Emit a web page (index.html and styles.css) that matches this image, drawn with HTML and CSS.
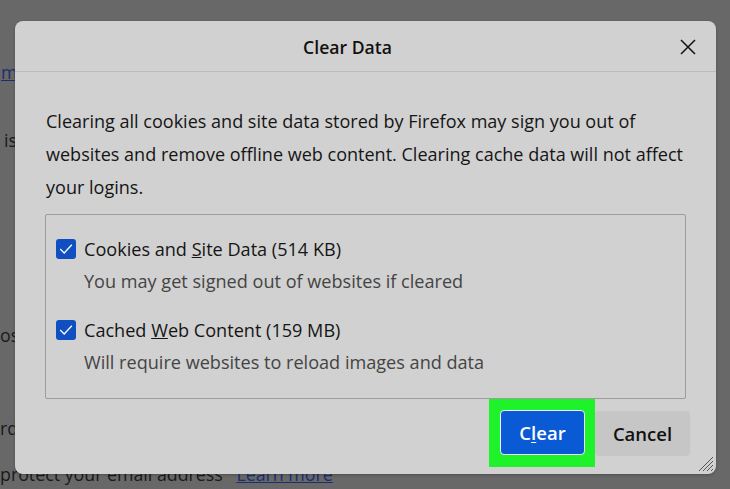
FILE: index.html
```html
<!DOCTYPE html>
<html lang="en">
<head>
<meta charset="utf-8">
<title>Clear Data</title>
<link rel="stylesheet" href="styles.css">
</head>
<body>
<div class="page">
  <div class="bg-line bg-l1"><a class="bg-link">m</a></div>
  <div class="bg-line bg-l2">is</div>
  <div class="bg-line bg-l3">os</div>
  <div class="bg-line bg-l4">rd:</div>
  <div class="bg-line bg-l5">protect your email address <a class="bg-link">Learn more</a></div>
</div>

<div class="dialog">
  <div class="dialog-header">
    <div class="dialog-title">Clear Data</div>
    <div class="close-btn">
      <svg width="16" height="16" viewBox="0 0 16 16"><path d="M1 1 L15 15 M15 1 L1 15" stroke="#111" stroke-width="1.5" fill="none"/></svg>
    </div>
  </div>
  <div class="dialog-body">
    <p class="intro">Clearing all cookies and site data stored by Firefox may sign you out of websites and remove offline web content. Clearing cache data will not affect your logins.</p>
    <div class="options">
      <div class="option">
        <div class="option-row">
          <span class="checkbox"><svg width="20" height="20" viewBox="0 0 20 20"><path d="M4.2 10 L8.2 14 L15.8 5.8" stroke="#fff" stroke-width="1.3" fill="none"/></svg></span>
          <span class="option-label">Cookies and <u>S</u>ite Data (514 KB)</span>
        </div>
        <div class="option-desc">You may get signed out of websites if cleared</div>
      </div>
      <div class="option">
        <div class="option-row">
          <span class="checkbox"><svg width="20" height="20" viewBox="0 0 20 20"><path d="M4.2 10 L8.2 14 L15.8 5.8" stroke="#fff" stroke-width="1.3" fill="none"/></svg></span>
          <span class="option-label">Cached <u>W</u>eb Content (159 MB)</span>
        </div>
        <div class="option-desc">Will require websites to reload images and data</div>
      </div>
    </div>
  </div>
  <div class="dialog-footer">
    <div class="highlight">
      <button class="btn btn-primary">C<u>l</u>ear</button>
    </div>
    <button class="btn btn-secondary">Cancel</button>
  </div>
  <svg class="grip" width="18" height="18" viewBox="0 0 18 18">
    <path d="M17 3 L3 17 M17 7 L7 17 M17 11 L11 17 M17 15 L15 17" stroke="#555" stroke-width="1" fill="none"/>
  </svg>
</div>
</body>
</html>
```

FILE: styles.css
```css
html, body {
  margin: 0;
  padding: 0;
}
body {
  width: 730px;
  height: 489px;
  overflow: hidden;
  position: relative;
  background: #686868;
  font-family: "Open Sans", "Noto Sans", sans-serif;
  color: #151515;
}
.page {
  display: flex;
  flex-direction: column;
  font-size: 17.8px;
  color: #1a1a1a;
  white-space: nowrap;
}
.bg-line {
  height: 28px;
  line-height: 28px;
}
.bg-link {
  color: #1b2f6e;
  text-decoration: underline;
}
.bg-l1 { margin-top: 58px; padding-left: 1px; }
.bg-l2 { margin-top: 40px; padding-left: 4px; }
.bg-l3 { margin-top: 167px; padding-left: 0; }
.bg-l4 { margin-top: 65px; padding-left: 0; }
.bg-l5 { margin-top: 18px; padding-left: 0; }
.bg-l5 .bg-link { margin-left: 9px; }

.dialog {
  position: absolute;
  left: 15px;
  top: 21px;
  width: 701px;
  height: 453px;
  background: #d1d1d1;
  border-radius: 8px;
  display: flex;
  flex-direction: column;
  box-shadow: 0 1px 3px rgba(0,0,0,0.25);
}
.dialog-header {
  height: 50px;
  border-bottom: 1px solid #bcbcbc;
  display: flex;
  align-items: center;
}
.dialog-title {
  flex: 1;
  text-align: center;
  font-size: 17.6px;
  font-weight: 600;
  color: #111;
  padding-top: 1px;
}
.close-btn {
  width: 36px;
  display: flex;
  align-items: center;
  padding-top: 1px;
}
.dialog-body {
  padding: 33px 20px 0 30px;
}
.intro {
  margin: 0;
  font-size: 18.05px;
  line-height: 33px;
  color: #151515;
  padding-left: 1px;
}
.options {
  margin-top: 10px;
  margin-right: 10px;
  border: 1px solid #9c9c9c;
  border-radius: 2px;
  padding: 19px 10px 20px 10px;
  display: flex;
  flex-direction: column;
  gap: 18px;
}
.option-row {
  display: flex;
  align-items: center;
  gap: 8px;
  height: 30px;
}
.checkbox {
  width: 20px;
  height: 20px;
  border-radius: 3px;
  background: #0f4fc2;
  display: block;
}
.checkbox svg { display: block; }
.option-label {
  font-size: 18.1px;
  color: #151515;
}
.option-desc {
  margin-left: 28px;
  font-size: 18.1px;
  color: #444;
  height: 31px;
  line-height: 31px;
  margin-top: 2px;
}
.dialog-footer {
  display: flex;
  justify-content: flex-end;
  align-items: center;
  padding-right: 26px;
  margin-top: 0;
}
.highlight {
  background: #1ef22a;
  padding: 11px 10px 12px 11px;
  display: flex;
}
.btn {
  font-family: "Open Sans", "Noto Sans", sans-serif;
  font-size: 18.5px;
  height: 45px;
  border-radius: 4px;
  border: none;
  padding: 0;
  margin: 0;
  font-weight: 600;
}
.btn-primary {
  width: 85px;
  background: #0a5ad6;
  color: #fff;
  border: 1.5px solid #f2f2f2;
}
.btn-primary u { text-decoration-thickness: 1px; text-underline-offset: 2px; }
.btn-secondary {
  width: 95px;
  background: #c6c6c6;
  color: #111;
}
.grip {
  position: absolute;
  right: 2px;
  bottom: 2px;
}
```
